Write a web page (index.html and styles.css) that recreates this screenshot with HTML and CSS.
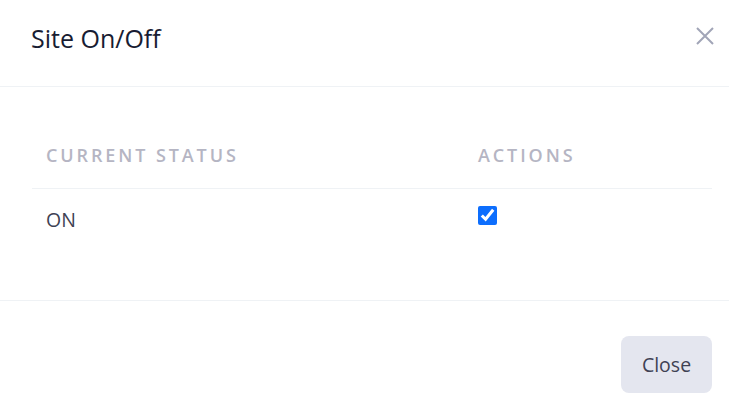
FILE: index.html
```html
<!DOCTYPE html>
<html>
<head>
<meta charset="utf-8">
<link rel="stylesheet" href="styles.css">
</head>
<body>
<div class="modal">
  <div class="modal-header">
    <h2 class="modal-title">Site On/Off</h2>
    <button class="btn-close" aria-label="Close">
      <svg width="18" height="18" viewBox="0 0 18 18"><path d="M1 1 L17 17 M17 1 L1 17" stroke="#a1a5b7" stroke-width="2" fill="none"/></svg>
    </button>
  </div>
  <div class="modal-body">
    <table class="table">
      <thead>
        <tr><th class="col-status">Current Status</th><th>Actions</th></tr>
      </thead>
      <tbody>
        <tr><td>ON</td><td class="cell-check"><input type="checkbox" class="check" checked></td></tr>
      </tbody>
    </table>
  </div>
  <div class="modal-footer">
    <button class="btn">Close</button>
  </div>
</div>
</body>
</html>
```
FILE: styles.css
```css
* { box-sizing: border-box; }
html, body { margin: 0; padding: 0; background: #fff; }
body { font-family: "Open Sans", "Noto Sans", sans-serif; color: #3f4254; }
.modal { width: 729px; height: 415px; overflow: hidden; }
.modal-header {
  display: flex; align-items: center; justify-content: space-between;
  padding: 21px 15px 31px 31px;
  border-bottom: 1px solid #eff2f5;
}
.modal-title { margin: 0; font-size: 25px; font-weight: 400; line-height: 34px; color: #181c32; }
.btn-close { background: none; border: 0; padding: 0; width: 18px; height: 18px; display: flex; align-items: center; justify-content: center; margin-top: -4px; }
.modal-body { padding: 32px 17px 49px 32px; }
.table { width: 100%; border-collapse: collapse; }
.table th {
  text-align: left; font-weight: 600; font-size: 18px; letter-spacing: 2.9px;
  text-transform: uppercase; color: #b5b5c3;
  padding: 24px 14px 21px; line-height: 24px;
  border-bottom: 1px solid #eff2f5;
}
.table th.col-status { width: 432px; }
.table td { padding: 19px 14px; line-height: 24px; font-size: 19.5px; color: #3f4254; vertical-align: top; }
.table td.cell-check { padding-top: 17px; }
.check { width: 19px; height: 19px; margin: 0; accent-color: #0d6efd; display: block; }
.modal-footer { display: flex; justify-content: flex-end; padding: 35px 17px 0 32px; border-top: 1px solid #eff2f5; }
.btn {
  font-family: inherit; font-size: 19.5px; color: #3f4254; background: #e4e6ef;
  border: 0; border-radius: 8px; width: 91px; height: 57px; padding: 0;
}
```
